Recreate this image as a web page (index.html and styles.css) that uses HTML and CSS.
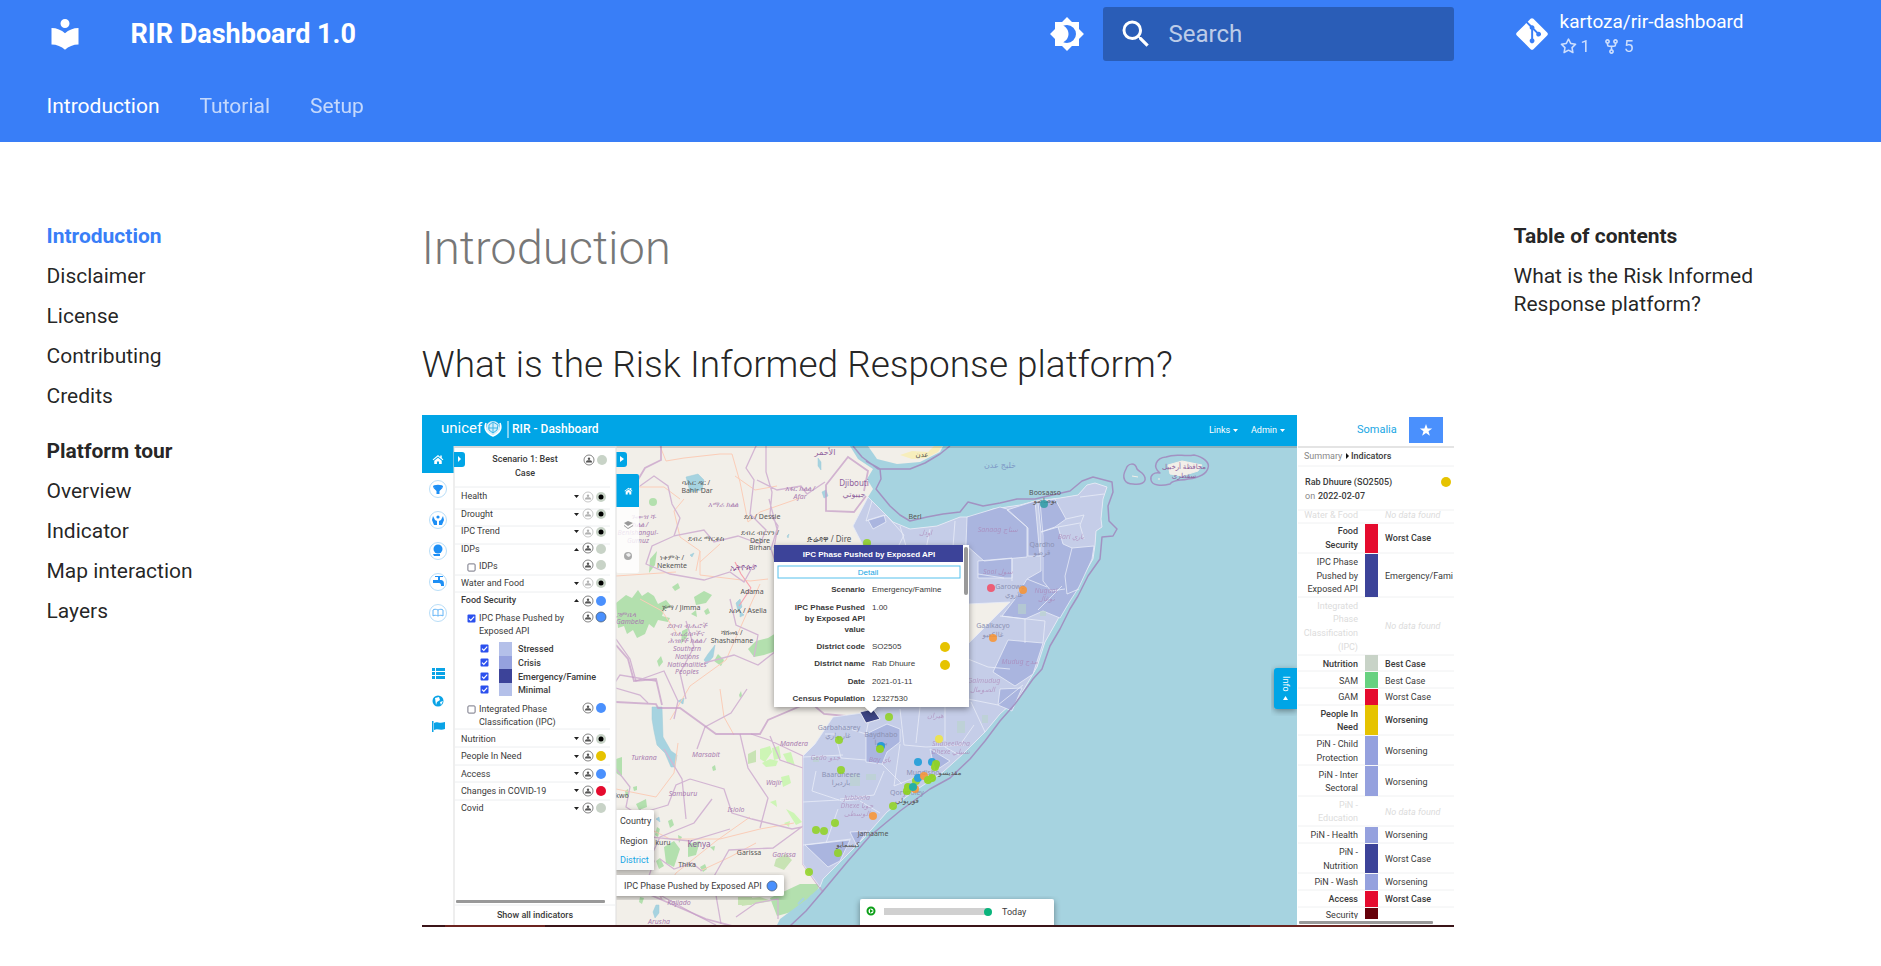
FILE: index.html
```html
<!DOCTYPE html>
<html lang="en">
<head>
<meta charset="utf-8">
<meta name="viewport" content="width=device-width, initial-scale=1">
<title>Introduction - RIR Dashboard 1.0</title>
<link rel="stylesheet" href="styles.css">
</head>
<body>
<header class="header">
  <div class="wrap header-row">
    <a class="logo" href="#" aria-label="RIR Dashboard 1.0">
      <svg class="icon" viewBox="0 0 24 24"><path d="M12 8a3 3 0 0 0 3-3 3 3 0 0 0-3-3 3 3 0 0 0-3 3 3 3 0 0 0 3 3m0 3.54C9.64 9.35 6.5 8 3 8v11c3.5 0 6.64 1.35 9 3.54 2.36-2.19 5.5-3.54 9-3.54V8c-3.5 0-6.64 1.35-9 3.54Z"/></svg>
    </a>
    <div class="site-title">RIR Dashboard 1.0</div>
    <button class="toggle" type="button" aria-label="Switch to dark mode">
      <svg class="icon" viewBox="0 0 24 24"><path d="M12 18c-.89 0-1.74-.2-2.5-.55C11.56 16.5 13 14.42 13 12c0-2.42-1.44-4.5-3.5-5.45C10.26 6.2 11.11 6 12 6a6 6 0 0 1 6 6 6 6 0 0 1-6 6m8-9.31V4h-4.69L12 .69 8.69 4H4v4.69L.69 12 4 15.31V20h4.69L12 23.31 15.31 20H20v-4.69L23.31 12 20 8.69Z"/></svg>
    </button>
    <form class="search" role="search">
      <label class="search-label" for="q" aria-label="Search">
        <svg class="icon" viewBox="0 0 24 24"><path d="M9.5 3A6.5 6.5 0 0 1 16 9.5c0 1.61-.59 3.09-1.56 4.23l.27.27h.79l5 5-1.5 1.5-5-5v-.79l-.27-.27A6.516 6.516 0 0 1 9.5 16 6.5 6.5 0 0 1 3 9.5 6.5 6.5 0 0 1 9.5 3m0 2C7 5 5 7 5 9.5S7 14 9.5 14 14 12 14 9.5 12 5 9.5 5Z"/></svg>
      </label>
      <input class="search-input" id="q" type="text" placeholder="Search">
    </form>
    <a class="source" href="#">
      <svg class="git" viewBox="0 0 448 512"><path d="M439.55 236.05 244 40.45a28.87 28.87 0 0 0-40.81 0l-40.66 40.63 51.52 51.52c27.06-9.14 52.68 16.77 43.39 43.68l49.66 49.66c34.23-11.8 61.18 31 35.47 56.69-26.49 26.49-70.21-2.87-56-37.34L240.22 199v121.85c25.3 12.54 22.26 41.85 9.08 55a34.34 34.34 0 0 1-48.55 0c-17.57-17.6-11.07-46.91 11.25-56v-123c-20.8-8.51-24.6-30.74-18.64-45L142.57 101 8.45 235.14a28.86 28.86 0 0 0 0 40.81l195.61 195.6a28.86 28.86 0 0 0 40.8 0l194.69-194.69a28.86 28.86 0 0 0 0-40.81z"/></svg>
      <span class="repo">
        <span class="repo-name">kartoza/rir-dashboard</span>
        <span class="facts">
          <span class="fact"><svg class="fact-icon" viewBox="0 0 16 16"><path d="M8 .25a.75.75 0 0 1 .673.418l1.882 3.815 4.21.612a.75.75 0 0 1 .416 1.279l-3.046 2.97.719 4.192a.751.751 0 0 1-1.088.791L8 12.347l-3.766 1.98a.75.75 0 0 1-1.088-.79l.72-4.194L.818 6.374a.75.75 0 0 1 .416-1.28l4.21-.611L7.327.668A.75.75 0 0 1 8 .25Zm0 2.445L6.615 5.5a.75.75 0 0 1-.564.41l-3.097.45 2.24 2.184a.75.75 0 0 1 .216.664l-.528 3.084 2.769-1.456a.75.75 0 0 1 .698 0l2.77 1.456-.53-3.084a.75.75 0 0 1 .216-.664l2.24-2.183-3.096-.45a.75.75 0 0 1-.564-.41L8 2.694Z"/></svg>1</span>
          <span class="fact"><svg class="fact-icon" viewBox="0 0 16 16"><path d="M5 5.372v.878c0 .414.336.75.75.75h4.5a.75.75 0 0 0 .75-.75v-.878a2.25 2.25 0 1 1 1.5 0v.878a2.25 2.25 0 0 1-2.25 2.25h-1.5v2.128a2.251 2.251 0 1 1-1.5 0V8.5h-1.5A2.25 2.25 0 0 1 3.5 6.25v-.878a2.25 2.25 0 1 1 1.5 0ZM5 3.25a.75.75 0 1 0-1.5 0 .75.75 0 0 0 1.5 0Zm6.75.75a.75.75 0 1 0 0-1.5.75.75 0 0 0 0 1.5Zm-3 8.75a.75.75 0 1 0-1.5 0 .75.75 0 0 0 1.5 0Z"/></svg>5</span>
        </span>
      </span>
    </a>
  </div>
  <nav class="wrap tabs" aria-label="Tabs">
    <a class="tab tab-active" href="#">Introduction</a>
    <a class="tab" href="#">Tutorial</a>
    <a class="tab" href="#">Setup</a>
  </nav>
</header>

<div class="wrap main">
  <nav class="side" aria-label="Navigation">
    <ul class="nav">
      <li><a class="current" href="#">Introduction</a></li>
      <li><a href="#">Disclaimer</a></li>
      <li><a href="#">License</a></li>
      <li><a href="#">Contributing</a></li>
      <li><a href="#">Credits</a></li>
    </ul>
    <div class="nav-title nav-section">Platform tour</div>
    <ul class="nav nav-sub">
      <li><a href="#">Overview</a></li>
      <li><a href="#">Indicator</a></li>
      <li><a href="#">Map interaction</a></li>
      <li><a href="#">Layers</a></li>
    </ul>
  </nav>

  <main class="content">
    <h1>Introduction</h1>
    <h2>What is the Risk Informed Response platform?</h2>
    <svg class="shot" viewBox="422 416 1032 512" role="img" aria-label="RIR Dashboard map of Somalia">
      <defs>
        <clipPath id="mapclip"><rect x="616" y="447" width="681" height="479"/></clipPath>
        <clipPath id="allclip"><rect x="422" y="416" width="1032" height="512"/></clipPath>
        <clipPath id="rowclip"><rect x="1297" y="511" width="157" height="409"/></clipPath>
        <filter id="shadow" x="-10%" y="-10%" width="120%" height="125%"><feDropShadow dx="0" dy="2" stdDeviation="3" flood-opacity=".4"/></filter>
        <symbol id="person" viewBox="0 0 12 12"><circle cx="6" cy="6" r="5" fill="#fff" stroke="#666" stroke-width=".8"/><circle cx="6" cy="4.700" r="1.200" fill="#555"/><path d="M3 8.600V7.600c0-.8 1.600-1.300 3-1.300s3 .5 3 1.300v1z" fill="#555"/></symbol>
        <symbol id="check" viewBox="0 0 9 9"><rect x=".5" y=".5" width="8" height="8" rx="1" fill="#2b50ee"/><path d="M2 4.6 3.8 6.4 7.2 2.6" fill="none" stroke="#fff" stroke-width="1.2"/></symbol>
        <symbol id="box" viewBox="0 0 9 9"><rect x=".9" y=".9" width="7.2" height="7.2" rx="1" fill="#fff" stroke="#667" stroke-width=".9"/></symbol>
        <symbol id="home" viewBox="0 0 16 14"><path d="M8 1 .8 7l1 1L8 3l6.200 5 1-1-2.200-1.900V1.500h-2v2zM3 8.500V13h3.600V9.500h2.800V13H13V8.500L8 4.500z" fill="#fff"/></symbol>
      </defs>
      <g clip-path="url(#allclip)">
      <rect x="422" y="416" width="1032" height="512" fill="#fff"/>

      <g clip-path="url(#mapclip)">
        <rect x="616" y="447" width="681" height="479" fill="#f2efe9"/>
        <g fill="#b3e0ae">
          <path d="M616 604l10-8 6 3 6-8 4 6 6-4 6 4 4 8 8-4 5 6-7 4-2 6 8 2-2 4-10-2-4 8-5-4-4 10-8 4-4-8-6 4-3-8-6 2z"/>
          <path d="M748 650l8-8 12-3 8-5v18l-12 4-10 2z"/><circle cx="653" cy="503" r="4"/><path d="M694 598l10-6 8 4-6 8-10 2zM682 632l6-3-1 9-6 7zM718 655l6 6-3 6-7-5zM616 760l6-2v20l-6-4zM664 848l10-6 6 8-6 18-8-4zM688 845l12-3-4 14-8 2zM636 805l10-5 1 8-8 3z"/>
          <path d="M770 899l30-14 20 0-5 12-20 15-18 5zM650 560l7-8-2 14-6 8zM691 615l5-4 1 7zM672 588l6-4 2 5-5 3zM704 612l4-3 2 5-4 2zM657 662l4-5 2 6-4 5z"/>
          <path d="M625 792l3-2 1 7-3 1zM633 788l4-1 0 4-3 1zM657 828l3 2-2 8-3-2zM668 822l4-2 2 6-4 3zM678 836l4 2-3 6zM656 862l4-3 4 8-5 3zM700 868l5-3 2 5-4 3zM710 848l5-1-1 5zM667 880l6-2 3 4-7 2zM640 898l4 1-2 6-3-2zM622 842l4-2 1 6-4 2zM645 838l4-4 2 5-4 4zM712 768l3-2 1 5-3 1zM739 696l2-4 1 5-2 2z"/>
        </g>
        <g fill="#cdf5b5"><path d="M760 750l10-3 2 6-7 10-5-3zM772 749l7-2 2 12-7 2zM762 764l8-4 8 2-2 5-10 1zM783 755l8-2 4 14-8-4zM781 778l8-2 2 8-8 4zM786 810l8 4 8 9-6 3zM770 803l6-2 1 7zM784 824l6-2-1 6z"/></g>
        <g fill="#c8e3b4"><path d="M748 755l8-4 0 12-8 2zM776 860l10-5 6 6-8 10-10-4zM740 900l20-2 12 4-30 5zM738 898h14v8h-14z"/></g>
        <g fill="#a6d3e0" stroke="#9ccbd9" stroke-width=".5">
          <path d="M652 708h10l1 30 8 14 6 4-2 12h-4l-6-14-8-8-3-14-2-12z"/><path d="M686 478l12-3 6 6-2 10-12 2zM708 655l7-9-2 12-6 7-3-4zM678 702l6-3-1 6zM656 906l3 0 0 8-4 5-2-6zM736 604l4-4 2 8-4 4zM822 493l4-2 2 6-4 2zM740 612l4 4-4 2zM656 820l3-2 1 5zM818 459l3 4 0 8-3-4zM787 537l2-2-1 4zM690 556l4-2-2 4z"/>
        </g>
        <!-- roads -->
        <g fill="none" stroke="#fbcdb8" stroke-width="1">
          <path d="M660 447l6 15 18-3 36-4 12 0 8 28 8 40 12-10 40-14M684 500l-10 12 6 26 20 14-4 20M700 552l0 24 50 6 18-2M760 585l-10 22-24 54-36 26-20 34M720 545l-20 18M616 577l60-4M720 690l4 28 10 18M660 900l16-26 40-32 34-24M616 790l40 8 18-24 4-30M630 820l40 20 50 0 40-10 34-6M735 477l20 14 22-4M620 480l20 8 24 0 16 12M640 600l22 12 16 24M700 872l30-14 26-14"/>
        </g>
        <path d="M735 563l6 12 10 14M751 589l-12 18" fill="none" stroke="#f7a3ae" stroke-width="1.200"/>
        <!-- sea -->
        <path fill="#a6d3e0" d="M850 447L858 460 873 470 867 480 873 490 868 498 877 507 893 523 910 530 937 527 960 518 973 518 993 510 1020 506 1035 502 1060 499 1078 496 1087 486 1095 484 1107 488 1103 500 1101 520 1102 528 1096 532 1095 546 1093 560 1083 577 1075 592 1066 602 1058 620 1045 643 1037 668 1020 697 1000 715 985 733 963 755 943 773 910 795 887 813 863 840 823 880 820 888 807 900 780 920 776 928H1297V447z"/>
        <path fill="#f2efe9" d="M868 447L877 460 897 465 920 463 940 453 943 447z"/>
        <path fill="#f7eebc" d="M900 456l12-4 16 1 6-6h8l-4 6-12 6-14 1z"/>
        <path d="M796 912l10-8 6-8M798 905l6-6M806 908l4-6" stroke="#a6d3e0" stroke-width="2" fill="none"/>
        <!-- country and region borders -->
        <g fill="none" stroke="#d3b6d3" stroke-width="1.300">
          <path d="M640 487l14-10 14 10 4 18 8 14-6 18 30-6 10 12 24-6 22 8 6-14-16-16 4-34-8-12 10-22 20-10 14 0 18-12 12-4M757 481l20 10 24-4 6 8 18-12M769 500l8 30-6 20 6 18M674 537l-22 10-6 18 24 10 34 6 26-8 14 10 10-18M616 640l14 20 6 22 28-10 14 30-4 18M686 622l8 26-14 26 6 26M704 664l30-8 24 10 18-14M730 600l6 26 22 10-4 22M747 690l-16 24-26 14-8 22M805 552l-6 10-23 2M766 447v26l6 20-2 22 8 12-4 22"/>
          <path d="M648 704l-8-8-28-8 8-12 36 6M740 735l8 34 20 30-8 30M664 750l18 30 4 40M712 800l-18 24-34 14-12 26M690 780l34 10 8 24 20 6 40 10 10-2M730 830l-40 12-40-4-10-28M803 827l-30 22-44 2-16 28 8 46M684 880l-24 16 36 20 20 10M803 757l-34-16-18-6M770 737l10 24 23 8M616 770l14 18-4 20 22 14M736 918l20-14 22-4 0 20M648 812l20-6 8-20 14-6M660 860l14 10 18-6 10 8M640 840l14 22-6 18 14 20"/>
        </g>
        <g fill="none" stroke="#c49ac6" stroke-width="1.800" opacity=".7"><path d="M616 703l40 2 2 4 22 0 36 26 44 0 8-14 42-18 14 12 22 2M616 646l12 14 6 22 22-2 6 26M646 894l60 26 30 8M661 447v14l-16 8-12 20M803 757v108l10 14 10 14"/><path d="M866 497l-12 16-28-1 0-26 22-28 20 14-4 20"/></g>
        <!-- choropleth -->
        <g stroke="#e9ecf8" stroke-width=".8" stroke-linejoin="round">
          <path fill="#c5cde8" d="M868 498L877 507 893 523 910 530 937 527 960 518 973 518 993 510 1020 506 1035 502 1060 499 1078 496 1087 486 1095 484 1107 488 1103 500 1101 520 1102 528 1096 532 1095 546 1093 560 1083 577 1075 592 1066 602 1058 620 1045 643 1037 668 1020 697 1000 715 985 733 963 755 943 773 910 795 887 813 863 840 823 880 820 888 803 865V757l12-12 18-27 37-5 98-68 42-42-42 2-28-5-70-40-17-33z"/>
          <g fill="#aab5df">
            <path d="M868 521l16-5 2 7-13 7zM967 518l33-10 7 2 20 18 0 30-43 4-18-16zM1007 511l28-9 5 55h-12v-28zM978 562l34-3v20h-34z"/>
            <path d="M1038 503l17-3 11 20-11 8-14 5zM1041 533l17-5 5 17 9 4 22-2-2 13-13 28-9 14-10 17-17-7-18 8-23-3 13-17 12-20 14-8zM1008 641l35 3-10 31-18 12-22-14zM1000 690l22-1-10 23-14-6z"/>
            <path d="M866 735l21-10 13 5v13l-13 10-5 12-16-2zM805 846l45-5-10 21-12 6zM850 833l17-1-10 15zM930 750l20 12-15 10z"/>
          </g>
          <path fill="none" d="M872 502l-6 20 20-6 18 20-8 16M900 527l6 20M930 530l-4 20M955 522l-2 26M1040 502l3 35 0 45 8 10 14-2M1012 560l0 22M1072 549l-7 28 2 18 12-5M1066 520l18-4-4 10 4 14M1080 498l24-3M1058 528l22-4M968 660l20 8 22 2M1025 620v24M1000 617l45 5M978 575l26 4M968 700l30 6 25-20M900 710l4 36 22 2 40-2M920 708l-4 36M945 706v42l14 8M870 715l-4 20-26-8M825 735l10 0 6 24 25 2M803 758l40-2M816 772l-4 20 30 10 24-2M840 800l34-4 10-24M803 803l36-2M838 810l-12 34M803 846l48-6M882 765l20 20M860 802l20 12M900 745l-6 42 20-8M960 746l14-20M985 733l-14-30M1045 622l-2 22M1027 580l20 8M1038 611l24-24"/>
          <path fill="#3d4585" stroke="#fff" d="M860 713l13-3 7 10-14 4z"/>
        </g>
        <g fill="#b9d3cb" opacity=".6"><path d="M957 722h8v12h-8zM982 716h6v8h-6zM1018 605h8v10h-8zM1040 612h6v5h-6zM850 775h10v12h-10zM866 775h10v6h-10zM813 758h6v5h-6z"/></g>
        <!-- maritime boundaries -->
        <g fill="none" stroke="#a292c2" stroke-width="1.500" stroke-linejoin="round">
          <path d="M853 447L862 458 878 470 895 470 910 470 925 464 940 455 950 447M866 462L880 470 881 480 876 490 890 507 900 516 910 522 927 518 943 515 960 513 968 503 983 507 1000 504 1017 500 1035 500 1070 492 1082 482 1093 478 1112 483 1113 493 1108 507 1109 522 1117 530 1113 537 1102 538 1100 560 1088 577 1078 597 1070 610 1060 630 1050 647 1042 670 1033 680 1015 705 1000 722 985 742 970 760 950 779 930 790 900 812 870 837 848 862 823 892 806 912 790 927"/>
          <path d="M1126 470c2-6 9-7 11 0 2 3 7 3 8 9 1 5-5 7-12 6-8 0-12-6-7-15zM1160 474c-8-6-4-15 6-16 10-4 18 0 28-2 10 2 16 8 14 13-2 8-12 10-20 11-8 2-14 0-18 5-8 2-18 2-19-4-1-5 3-8 9-7z"/>
        </g>
        <path d="M1168 466l14-4 20 4-4 6-16 5-12-2zM1132 477l6 1M1158 480l2 0" fill="#f2efe9" stroke="#f2efe9"/>

        <g class="t-map" text-anchor="middle">
          <text x="696" y="486">ባሕር ዳር /</text><text x="697" y="494">Bahir Dar</text>
          <text x="762" y="520">ደሴ / Dessie</text>
          <text x="760" y="536">ደብረ ብርሃን /</text><text x="760" y="544">Debre</text><text x="760" y="551">Birhan</text>
          <text x="706" y="542">ደብረ ማርቆስ</text><text x="672" y="561">ነቀምት /</text><text x="672" y="569">Nekemte</text>
          <text class="t-map-l" x="829" y="543">ድሬዳዋ / Dire</text>
          <text x="752" y="595">Adama</text><text x="681" y="611">ጅማ / Jimma</text><text x="748" y="614">አሰላ / Asella</text>
          <text x="732" y="636">ሻሸመኔ /</text><text x="732" y="644">Shashamane</text>
          <text x="915" y="520">Berl</text><text x="922" y="458">عدن</text>
          <text x="1045" y="496">Boosaaso</text><text x="1045" y="504">بوصاصو</text>
          <text x="663" y="846">kuru</text><text x="622" y="799">kwo</text><text x="687" y="868">Thika</text><text x="749" y="856">Garissa</text>
          <text x="873" y="837">Jamaame</text><text x="950" y="776">مقديسو</text><text x="848" y="848">كيسمايو</text><text x="907" y="804">قوريولي</text>
        </g>
        <g class="t-map t-faint" text-anchor="middle">
          <text x="839" y="731">Garbahaarey</text><text x="838" y="739">غاربهاري</text><text x="881" y="738">Baydhabo</text><text x="881" y="746">بيدوا</text>
          <text x="841" y="778">Baardheere</text><text x="841" y="786">بارديرا</text><text x="923" y="776">Muqdisho</text><text x="907" y="796">Qoryooley</text>
          <text x="1042" y="548">Qardho</text><text x="1042" y="556">قرضو</text><text x="1010" y="590">Garoowe</text><text x="1014" y="598">غاروي</text>
          <text x="993" y="629">Gaalkacyo</text><text x="993" y="638">غالكعيو</text>
        </g>
        <g class="t-region" text-anchor="middle">
          <text x="723" y="508">አማራ ክልል</text><text x="800" y="492">አፋር ክልል /</text><text x="800" y="500">Afar</text>
          <text x="644" y="520">ጉሙዝ ሻ-</text><text x="640" y="528">ክልል /</text><text x="638" y="536">Benishangul-</text><text x="638" y="544">Gumuz</text>
          <text x="626" y="618">ጋምቤላ</text><text x="630" y="625">Gambela</text>
          <text x="687" y="629">ደቡብ ብሔሮች</text><text x="687" y="637">ብሔረሰቦችና</text><text x="687" y="644">ሕዝቦች ክልል /</text>
          <text x="687" y="652">Southern</text><text x="687" y="660">Nations</text><text x="687" y="668">Nationalities</text><text x="687" y="675">Peoples</text>
          <text x="644" y="761">Turkana</text><text x="706" y="758">Marsabit</text><text x="794" y="747">Mandera</text><text x="774" y="786">Wajir</text>
          <text x="683" y="797">Samburu</text><text x="736" y="813">Isiolo</text><text x="784" y="858">Garissa</text><text x="679" y="906">Kajiado</text><text x="659" y="925">Arusha</text>
          <g opacity=".6"><text x="825" y="761">Gedo جدو</text><text x="880" y="763">Bay باي</text><text x="857" y="801">Jubbada</text><text x="857" y="809">Dhexe جوبا</text><text x="857" y="817">الوسطى</text>
          <text x="951" y="747">Shabeellaha</text><text x="951" y="755">Dhexe شبيلي</text><text x="1071" y="540">Bari باري</text><text x="1046" y="594">Nugaal</text><text x="1046" y="602">نوغال</text><text x="1020" y="665">Mudug مدج</text>
          <text x="998" y="533">Sanaag سناج</text><text x="998" y="575">Sool سول</text><text x="925" y="536">اودل</text><text x="984" y="684">Galmudug</text><text x="982" y="693">الصومال</text><text x="935" y="719">هيران</text></g>
        </g>
        <g class="t-country" text-anchor="middle">
          <text x="854" y="487">Djibouti</text><text x="854" y="498">جيبوتي</text><text x="743" y="571">ኢትዮጵያ</text><text x="699" y="848">Kenya</text><text x="825" y="456">الأحمر</text><text class="t-7" x="1184" y="470">محافظة أرخبيل</text><text class="t-7" x="1184" y="479">سقطرى</text>
          <text class="t-sea" x="1000" y="469">خليج عدن</text>
        </g>

        <g opacity=".85">
          <g fill="#8fd41f"><circle cx="867" cy="544" r="4"/><circle cx="889" cy="718" r="4"/><circle cx="839" cy="741" r="4"/><circle cx="841" cy="771" r="4"/><circle cx="893" cy="807" r="4"/><circle cx="835" cy="824" r="4"/><circle cx="816" cy="831" r="4"/><circle cx="824" cy="832" r="4"/><circle cx="838" cy="854" r="4"/><circle cx="809" cy="873" r="4"/><circle cx="916" cy="782" r="4"/></g>
          <g fill="#159bd8"><circle cx="918" cy="763" r="4"/><circle cx="932" cy="763" r="4"/><circle cx="918" cy="779" r="4"/><circle cx="881" cy="747" r="4"/></g>
          <g fill="#fb9430"><circle cx="924" cy="777" r="4"/><circle cx="873" cy="817" r="4"/><circle cx="915" cy="790" r="4"/><circle cx="993" cy="639" r="4"/><circle cx="1023" cy="591" r="4"/></g>
          <g fill="#8bd50d"><circle cx="880" cy="750" r="4"/><circle cx="936" cy="765" r="4"/><circle cx="935" cy="768" r="4"/><circle cx="928" cy="781" r="4"/><circle cx="932" cy="779" r="4"/><circle cx="908" cy="788" r="4"/><circle cx="907" cy="792" r="4"/></g>
          <circle cx="913" cy="788" r="4" fill="#0ca99a"/><circle cx="1044" cy="505" r="4" fill="#2f9da4"/><circle cx="939" cy="740" r="4" fill="#f1e63c"/><circle cx="991" cy="589" r="4" fill="#f44b63"/>
        </g>

        <!-- map tools -->
        <path d="M616 453h8a3 3 0 0 1 3 3v9a3 3 0 0 1-3 3h-8z" fill="#00a5e6"/><path d="M620 457l4 3-4 3z" fill="#fff"/>
        <rect x="616" y="475" width="23" height="99" rx="2" fill="#fff" fill-opacity=".8"/>
        <path d="M616 475h21a2 2 0 0 1 2 2v31h-23z" fill="#00a5e6"/><use href="#home" x="624" y="488" width="9" height="8"/>
        <path d="M624 524l4-2 5 2-5 3zM624 526l4 3 5-3v1l-5 3-4-3z" fill="#999"/><circle cx="628" cy="557" r="4" fill="#aaa"/><path d="M626 555l3-1 2 2-2 2-2-1z" fill="#eee"/>
        <g filter="url(#shadow)"><rect x="612" y="811" width="42" height="60" rx="2" fill="#fff"/></g>
        <rect x="616" y="851" width="38" height="20" fill="#f6f7f8"/>
        <g class="t-9"><text x="620" y="825">Country</text><text x="620" y="845">Region</text><text class="t-cyan" x="620" y="864">District</text></g>
        <g filter="url(#shadow)"><rect x="612" y="876" width="172" height="21" rx="2" fill="#fff"/></g>
        <text class="t-9" x="624" y="890">IPC Phase Pushed by Exposed API</text><circle cx="772" cy="887" r="5" fill="#4a90fd" stroke="#456" stroke-width=".7"/>
        <g filter="url(#shadow)"><rect x="860" y="900" width="194" height="30" rx="2" fill="#fff"/></g>
        <circle cx="871" cy="912" r="3.500" fill="#fff" stroke="#0c9f18" stroke-width="2"/><path d="M870 910l3 2-3 2z" fill="#0c9f18"/>
        <rect x="884" y="909" width="104" height="7" fill="#d0d0d0"/><circle cx="988" cy="913" r="4" fill="#0ab47c"/><text class="t-9" x="1002" y="916">Today</text>
        <path d="M1297 669h-20a3 3 0 0 0-3 3v35a3 3 0 0 0 3 3h20z" fill="#00a5e6" filter="url(#shadow)"/>
        <text class="t-9 t-white" transform="translate(1283 677) rotate(90)">Info</text><path d="M1283 701h5l-2.500-4z" fill="#fff"/>

        <!-- feature popup -->
        <g filter="url(#shadow)"><path d="M774 546h195v162h-92l-6 6-6-6h-91z" fill="#fff"/></g>
        <rect x="774" y="546" width="189" height="17" fill="#3c4399"/><rect x="964" y="548" width="4" height="48" rx="2" fill="#999"/>
        <rect x="778" y="567" width="182" height="12" fill="#fff" stroke="#54c0ec"/>
        <g class="t-pop" text-anchor="middle"><text class="t-bold t-white" x="869" y="558">IPC Phase Pushed by Exposed API</text><text class="t-cyan" x="868" y="576">Detail</text></g>
        <g class="t-pop t-bold" text-anchor="end"><text x="865" y="593">Scenario</text><text x="865" y="611">IPC Phase Pushed</text><text x="865" y="622">by Exposed API</text><text x="865" y="633">value</text><text x="865" y="650">District code</text><text x="865" y="667">District name</text><text x="865" y="685">Date</text><text x="865" y="702">Census Population</text></g>
        <g class="t-pop"><text x="872" y="593">Emergency/Famine</text><text x="872" y="611">1.00</text><text x="872" y="650">SO2505</text><text x="872" y="667">Rab Dhuure</text><text x="872" y="685">2021-01-11</text><text x="872" y="702">12327530</text></g>
        <circle cx="945" cy="648" r="5" fill="#e6c300"/><circle cx="945" cy="666" r="5" fill="#e6c300"/>
      </g>

      <!-- top bar -->
      <rect x="422" y="447" width="875" height="2" fill="#000" opacity=".15"/>
      <rect x="422" y="416" width="875" height="31" fill="#00a5e6"/>
      <text class="t-unicef" x="441" y="434">unicef</text>
      <circle cx="493" cy="429" r="7" fill="#d3eefa"/><path d="M489 426l4-3 5 3-1 5-4 3-4-3zM493 423v11M488 429h10" fill="none" stroke="#38b5e8" stroke-width="1"/><path d="M486 424c-2 5 0 10 7 13 7-3 9-8 7-13" fill="none" stroke="#fff" stroke-width="1.500"/>
      <path d="M508 422v17" stroke="#fff"/>
      <text class="t-brand" x="512" y="434">RIR - Dashboard</text>
      <g class="t-9 t-white"><text x="1209" y="434">Links</text><text x="1251" y="434">Admin</text></g>
      <path d="M1233 430h5l-2.500 3zM1280 430h5l-2.500 3z" fill="#fff"/>

      <!-- left icon rail -->
      <rect x="422" y="447" width="32" height="27" fill="#00a5e6"/><use href="#home" x="432" y="455" width="12" height="11"/>
      <path d="M454 447v479M616 447v479" stroke="#ddd"/>
      <path d="M454 453h8a3 3 0 0 1 3 3v9a3 3 0 0 1-3 3h-8z" fill="#00a5e6"/><path d="M458 457l3 3-3 3z" fill="#fff"/>
      <g fill="#fff" stroke="#b9def8"><circle cx="438" cy="490" r="8.500"/><circle cx="438" cy="521" r="8.500"/><circle cx="438" cy="552" r="8.500"/><circle cx="438" cy="583" r="8.500"/><circle cx="438" cy="614" r="8.500"/></g>
      <g fill="#1d8ff5"><ellipse cx="438" cy="487.500" rx="5" ry="1.700"/><path d="M433 488.500h10l-3.500 3.500v3h-3v-3z"/><path d="M433 517l2 4 2 1v4h-3l-2-5zM443 517l-2 4-2 1v4h3l2-5z"/><circle cx="438" cy="518" r="1.600"/><circle cx="438" cy="550" r="4.500"/><path d="M433 555h7v2h-6zM433 581h5v-3h2v3c4 0 4 2 4 6h-3c0-3-1-3-3-3h-5zM435 577h8v1h-8z"/></g>
      <path d="M438 611c-2-1-4-1-5 0v6c1-1 3-1 5 0 2-1 4-1 5 0v-6c-1-1-3-1-5 0v6" fill="none" stroke="#63b4f7"/>
      <g fill="#0aa3e6"><path d="M432 669h3v3h-3zM436 669h9v3h-9zM432 673h3v3h-3zM436 673h9v3h-9zM432 677h3v3h-3zM436 677h9v3h-9z"/><circle cx="438" cy="702" r="5.500"/><path d="M432 722h1.500v11H432zM434 724c3-2 5 1 11-1v7c-5 2-7-1-11 1z"/></g>
      <path d="M435 699l4-1 1 3-3 2-1 3zM440 703l3-1-2 4z" fill="#fff"/>

      <!-- indicator list -->
      <path d="M455 488h155M455 510h155M455 527h155M455 545h155M455 576h155M455 593h155M455 730h155M455 748h155M455 766h155M455 783h155M455 801h155M455 906h161" stroke="#eceef0"/>
      <g class="t-9 t-med" text-anchor="middle"><text x="525" y="463">Scenario 1: Best</text><text x="525" y="477">Case</text></g>
      <g class="t-9">
        <text x="461" y="500">Health</text><text x="461" y="518">Drought</text><text x="461" y="535">IPC Trend</text><text x="461" y="553">IDPs</text><text x="479" y="570">IDPs</text><text x="461" y="587">Water and Food</text><text class="t-med" x="461" y="604">Food Security</text>
        <text x="479" y="622">IPC Phase Pushed by</text><text x="479" y="635">Exposed API</text>
        <text x="479" y="713">Integrated Phase</text><text x="479" y="726">Classification (IPC)</text>
        <text x="461" y="743">Nutrition</text><text x="461" y="760">People In Need</text><text x="461" y="778">Access</text><text x="461" y="795">Changes in COVID-19</text><text x="461" y="812">Covid</text>
      </g>
      <g class="t-9 t-med"><text x="518" y="653">Stressed</text><text x="518" y="667">Crisis</text><text x="518" y="681">Emergency/Famine</text><text x="518" y="694">Minimal</text></g>
      <text class="t-9 t-med" x="535" y="919" text-anchor="middle">Show all indicators</text>
      <g fill="#222"><path d="M574 496h5l-2.500 3zM574 514h5l-2.500 3zM574 531h5l-2.500 3zM574 552h5l-2.500-3zM574 583h5l-2.500 3zM574 603h5l-2.500-3zM574 738h5l-2.500 3zM574 756h5l-2.500 3zM574 773h5l-2.500 3zM574 790h5l-2.500 3zM574 808h5l-2.500 3z"/></g>
      <use href="#person" x="583" y="455" width="12" height="12"/><use href="#person" x="582" y="543" width="12" height="12"/><use href="#person" x="582" y="560" width="12" height="12"/><use href="#person" x="582" y="596" width="12" height="12"/><use href="#person" x="582" y="612" width="12" height="12"/><use href="#person" x="582" y="703" width="12" height="12"/><use href="#person" x="582" y="734" width="12" height="12"/><use href="#person" x="582" y="751" width="12" height="12"/><use href="#person" x="582" y="769" width="12" height="12"/><use href="#person" x="582" y="786" width="12" height="12"/><use href="#person" x="582" y="803" width="12" height="12"/>
      <g opacity=".45"><use href="#person" x="582" y="492" width="12" height="12"/><use href="#person" x="582" y="509" width="12" height="12"/><use href="#person" x="582" y="527" width="12" height="12"/><use href="#person" x="582" y="578" width="12" height="12"/></g>
      <g fill="#c8d3c7"><circle cx="602" cy="461" r="5"/><circle cx="601" cy="498" r="5"/><circle cx="601" cy="515" r="5"/><circle cx="601" cy="533" r="5"/><circle cx="601" cy="550" r="5"/><circle cx="601" cy="566" r="5"/><circle cx="601" cy="584" r="5"/><circle cx="601" cy="740" r="5"/><circle cx="601" cy="809" r="5"/></g>
      <g fill="#000"><circle cx="601" cy="498" r="2.500"/><circle cx="601" cy="515" r="2.500"/><circle cx="601" cy="533" r="2.500"/><circle cx="601" cy="584" r="2.500"/><circle cx="601" cy="740" r="2.500"/></g>
      <g fill="#4a90fd"><circle cx="601" cy="602" r="5"/><circle cx="601" cy="618" r="5" stroke="#456" stroke-width=".7"/><circle cx="601" cy="709" r="5"/><circle cx="601" cy="775" r="5"/></g>
      <circle cx="601" cy="757" r="5" fill="#e6c300"/><circle cx="601" cy="792" r="5" fill="#e50b2e"/>
      <use href="#box" x="467" y="564" width="9" height="9"/><use href="#box" x="467" y="706" width="9" height="9"/><use href="#check" x="467" y="615" width="9" height="9"/><use href="#check" x="480" y="645" width="9" height="9"/><use href="#check" x="480" y="659" width="9" height="9"/><use href="#check" x="480" y="673" width="9" height="9"/><use href="#check" x="480" y="686" width="9" height="9"/>
      <rect x="499" y="643" width="13" height="14" fill="#b4c0e9"/><rect x="499" y="657" width="13" height="13" fill="#95a1de"/><rect x="499" y="670" width="13" height="14" fill="#3c4399"/><rect x="499" y="684" width="13" height="13" fill="#b4c0e9"/>
      <rect x="456" y="901" width="149" height="3" rx="1" fill="#999"/>

      <!-- district details -->
      <rect x="1297" y="416" width="157" height="512" fill="#fff"/>
      <text class="t-11 t-cyan" x="1357" y="434">Somalia</text><rect x="1409" y="418" width="34" height="26" fill="#4a90fd"/><path d="M1426 425l1.600 4.500h4.600l-3.700 2.800 1.400 4.500-3.900-2.700-3.900 2.700 1.400-4.500-3.700-2.800h4.600z" fill="#fff"/>
      <rect x="1298" y="447" width="156" height="2" fill="#e4e4e4"/>
      <path d="M1298 467h156M1298 511h156M1298 524h156M1298 554h156M1298 598h156M1298 656h156M1298 672h156M1298 689h156M1298 706h156M1298 736h156M1298 766h156M1298 797h156M1298 827h156M1298 844h156M1298 874h156M1298 891h156M1298 908h156" stroke="#f0f1f2"/>
      <g class="t-9"><text class="t-gray" x="1304" y="460">Summary</text><path d="M1346 454l3 3-3 3z" fill="#111"/><text class="t-med" x="1351" y="460">Indicators</text><text class="t-med" x="1305" y="486">Rab Dhuure (SO2505)</text><text class="t-gray" x="1305" y="500">on</text><text class="t-med" x="1318" y="500">2022-02-07</text></g>
      <circle cx="1446" cy="483" r="5" fill="#e6c300"/>
      <g clip-path="url(#rowclip)">
        <g class="t-9 t-ghost" text-anchor="end"><text x="1358" y="519">Water &amp; Food</text><text x="1358" y="610">Integrated</text><text x="1358" y="623">Phase</text><text x="1358" y="637">Classification</text><text x="1358" y="651">(IPC)</text><text x="1358" y="809">PiN -</text><text x="1358" y="822">Education</text></g>
        <g class="t-9 t-ghost t-ital"><text x="1385" y="519">No data found</text><text x="1385" y="630">No data found</text><text x="1385" y="816">No data found</text></g>
        <g class="t-9" text-anchor="end"><text class="t-med" x="1358" y="535">Food</text><text class="t-med" x="1358" y="549">Security</text><text x="1358" y="566">IPC Phase</text><text x="1358" y="580">Pushed by</text><text x="1358" y="593">Exposed API</text><text class="t-med" x="1358" y="668">Nutrition</text><text x="1358" y="685">SAM</text><text x="1358" y="701">GAM</text><text class="t-med" x="1358" y="718">People In</text><text class="t-med" x="1358" y="731">Need</text><text x="1358" y="748">PiN - Child</text><text x="1358" y="762">Protection</text><text x="1358" y="779">PiN - Inter</text><text x="1358" y="792">Sectoral</text><text x="1358" y="839">PiN - Health</text><text x="1358" y="856">PiN -</text><text x="1358" y="870">Nutrition</text><text x="1358" y="886">PiN - Wash</text><text class="t-med" x="1358" y="903">Access</text><text x="1358" y="919">Security</text></g>
        <g class="t-9"><text class="t-med" x="1385" y="542">Worst Case</text><text x="1385" y="580">Emergency/Fami</text><text class="t-med" x="1385" y="668">Best Case</text><text x="1385" y="685">Best Case</text><text x="1385" y="701">Worst Case</text><text class="t-med" x="1385" y="724">Worsening</text><text x="1385" y="755">Worsening</text><text x="1385" y="786">Worsening</text><text x="1385" y="839">Worsening</text><text x="1385" y="863">Worst Case</text><text x="1385" y="886">Worsening</text><text class="t-med" x="1385" y="903">Worst Case</text></g>
        <g fill="#95a1de"><rect x="1365" y="737" width="13" height="29"/><rect x="1365" y="767" width="13" height="30"/><rect x="1365" y="828" width="13" height="16"/><rect x="1365" y="875" width="13" height="16"/></g>
        <g fill="#e50b2e"><rect x="1365" y="525" width="13" height="29"/><rect x="1365" y="690" width="13" height="16"/><rect x="1365" y="892" width="13" height="16"/></g>
        <g fill="#3c4399"><rect x="1365" y="555" width="13" height="43"/><rect x="1365" y="845" width="13" height="29"/></g>
        <rect x="1365" y="656" width="13" height="16" fill="#c8d3c7"/><rect x="1365" y="673" width="13" height="16" fill="#67d180"/><rect x="1365" y="706" width="13" height="30" fill="#e6c300"/><rect x="1365" y="909" width="13" height="11" fill="#66000a"/>
      </g>
      <rect x="1299" y="922" width="134" height="3" rx="1" fill="#999"/>
      <rect x="422" y="926" width="1032" height="2" fill="#3a1418"/><path d="M445 927h100M1250 927h120" stroke="#9c3326" stroke-width="1"/>
      </g>
    </svg>
  </main>

  <nav class="toc" aria-label="Table of contents">
    <div class="nav-title">Table of contents</div>
    <ul class="nav nav-sub">
      <li><a href="#">What is the Risk Informed Response platform?</a></li>
    </ul>
  </nav>
</div>
</body>
</html>
```
FILE: styles.css
```css
* { box-sizing: border-box; }

body {
  margin: 0;
  background: #fff;
  color: rgba(0, 0, 0, .87);
  font-family: Roboto, "Liberation Sans", sans-serif;
  font-size: 21px;
  line-height: 28px;
}

a { color: inherit; text-decoration: none; }

.wrap {
  max-width: 1836px;
  margin: 0 auto;
  padding-right: 6px;
}

/* Header */
.header { background: #397ef7; color: #fff; }

.header-row {
  display: flex;
  align-items: center;
  height: 68px;
}

.icon { display: block; width: 36px; height: 36px; fill: currentColor; }
.logo { margin-left: 24px; }

.site-title {
  flex: 1;
  margin-left: 48px;
  font-size: 27px;
  font-weight: 700;
}

.toggle {
  margin: 0 18px 0 0;
  padding: 0;
  border: 0;
  background: none;
  color: inherit;
}

.search {
  display: flex;
  align-items: center;
  width: 351px;
  height: 54px;
  border-radius: 3px;
  background: rgba(0, 0, 0, .26);
}

.search-label { padding: 0 15px; }

.search-input {
  flex: 1;
  min-width: 0;
  padding: 0;
  border: 0;
  outline: 0;
  background: none;
  color: #fff;
  font: inherit;
  font-size: 24px;
}
.search-input::placeholder { color: rgba(255, 255, 255, .7); opacity: 1; }

.source {
  display: flex;
  align-items: center;
  gap: 12px;
  width: 399px;
  padding-left: 62px;
}
.git { width: 32px; height: 36px; fill: currentColor; }
.repo { display: flex; flex-direction: column; font-size: 19px; line-height: 24px; }
.facts { display: flex; gap: 13px; font-size: 17px; opacity: .75; }
.fact { display: flex; align-items: center; gap: 4px; }
.fact-icon { width: 17px; height: 17px; fill: currentColor; }

.tabs {
  display: flex;
  gap: 40px;
  padding: 24px 0 22px 24px;
}
.tab { opacity: .7; }
.tab-active { opacity: 1; }

/* Page body */
.main {
  display: grid;
  grid-template-columns: 363px minmax(0, 1fr) 363px;
  padding-top: 80px;
}

.side { padding-left: 24px; }
.toc { padding: 0 65px 0 24px; }

.nav {
  display: flex;
  flex-direction: column;
  gap: 12px;
  margin: 0;
  padding: 0;
  list-style: none;
}
.nav a { display: block; }
.nav .current { color: #397ef7; font-weight: 700; }
.nav-title { font-weight: 700; }
.nav-section { margin-top: 27px; }
.nav-sub { margin-top: 12px; }

.content { padding: 0 36px; }

h1 {
  margin: 0 0 61px;
  color: rgba(0, 0, 0, .54);
  font-size: 47px;
  font-weight: 300;
  line-height: 52px;
}

h2 {
  margin: 0 0 20px;
  font-size: 37px;
  font-weight: 300;
  line-height: 60px;
}

/* Dashboard illustration */
.shot { display: block; width: 100%; height: auto; font-family: Roboto, "Liberation Sans", sans-serif; }
.shot text { fill: #3a3a3a; }
.shot .t-7 { font-size: 7px; }
.shot .t-9 { font-size: 9px; }
.shot .t-11 { font-size: 11px; }
.shot .t-med { font-weight: 500; }
.shot .t-bold { font-weight: 700; }
.shot .t-ital text { font-style: italic; }
.shot .t-ghost text { fill: #dcdcdc; }
.shot .t-gray { fill: #888; }
.shot .t-cyan { fill: #17a6e4; }
.shot .t-white, .shot .t-white text { fill: #fff; }
.shot .t-brand { font-size: 12px; font-weight: 500; fill: #fff; }
.shot .t-unicef { font-size: 15px; fill: #fff; }
.shot .t-pop { font-family: "Liberation Sans", sans-serif; font-size: 8px; }
.shot .t-map text { font-family: "Noto Sans", "DejaVu Sans", sans-serif; font-size: 7px; fill: #555; }
.shot .t-map .t-map-l { font-size: 8px; }
.shot .t-faint text { fill: #8c92b4; }
.shot .t-region text { font-family: "Noto Sans", "DejaVu Sans", sans-serif; font-size: 7px; font-style: italic; fill: #a97db0; }
.shot .t-country text { font-family: "Noto Sans", "DejaVu Sans", sans-serif; font-size: 8px; fill: #8f5f9c; }
.shot .t-country .t-7 { font-size: 7px; }
.shot .t-country .t-sea { fill: #7d98c6; }
```
